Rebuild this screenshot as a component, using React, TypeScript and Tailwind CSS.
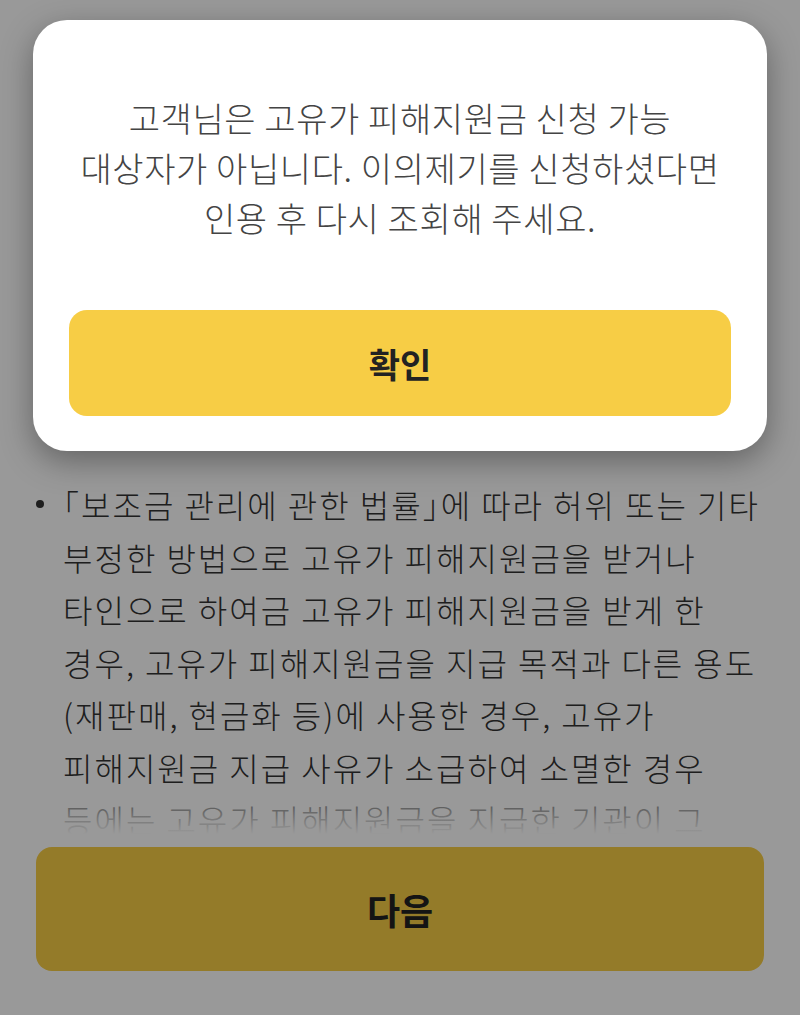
import React from 'react';

const lines: React.ReactNode[] = [
  <>
    <span className="[font-feature-settings:'halt']">「</span>보조금 관리에 관한 법률<span className="[font-feature-settings:'halt']">」</span>에 따라 허위 또는 기타
  </>,
  '부정한 방법으로 고유가 피해지원금을 받거나',
  '타인으로 하여금 고유가 피해지원금을 받게 한',
  '경우, 고유가 피해지원금을 지급 목적과 다른 용도',
  '(재판매, 현금화 등)에 사용한 경우, 고유가',
  '피해지원금 지급 사유가 소급하여 소멸한 경우',
  '등에는 고유가 피해지원금을 지급한 기관이 그',
];

const message = [
  '고객님은 고유가 피해지원금 신청 가능',
  '대상자가 아닙니다. 이의제기를 신청하셨다면',
  '인용 후 다시 조회해 주세요.',
];

export default function App() {
  return (
    <div className="relative h-[1015px] w-[800px] overflow-hidden bg-white font-['Noto_Sans_CJK_KR','Noto_Sans',sans-serif] text-[#333]">
      {/* page behind the dialog */}
      <div className="relative h-[834px] overflow-hidden pt-[478px] pr-[20px] pl-[36px]">
        <div className="flex">
          <div className="flex h-[52.5px] w-[27px] shrink-0 items-center">
            <span className="block h-[8px] w-[8px] rounded-full bg-[#333]" />
          </div>
          <div className="text-[32px] leading-[52.5px] font-light tracking-[2px]">
            {lines.map((l, i) => (
              <div key={i} className="whitespace-nowrap">{l}</div>
            ))}
          </div>
        </div>
        <div className="absolute bottom-0 left-0 right-0 h-[40px] bg-gradient-to-b from-white/30 to-white" />
      </div>
      <div className="px-[36px] pt-[13px]">
        <button className="flex h-[124px] w-full items-center justify-center rounded-[16px] bg-[#f7cd45] text-[36px] font-bold text-[#222]">
          다음
        </button>
      </div>

      {/* dim overlay */}
      <div className="absolute inset-0 bg-black/40" />

      {/* dialog */}
      <div className="absolute top-[20px] left-[33px] w-[734px] rounded-[34px] bg-white px-[36px] pt-[73px] pb-[35px] shadow-[0_10px_32px_rgba(0,0,0,0.35)]">
        <div className="text-center text-[34px] leading-[50px] font-light tracking-[0.6px] text-[#444]">
          {message.map((m) => (
            <div key={m} className="whitespace-nowrap">{m}</div>
          ))}
        </div>
        <button className="mt-[67px] flex h-[106px] w-full items-center justify-center rounded-[18px] bg-[#f7cd45] text-[34px] font-bold text-[#222]">
          확인
        </button>
      </div>
    </div>
  );
}
